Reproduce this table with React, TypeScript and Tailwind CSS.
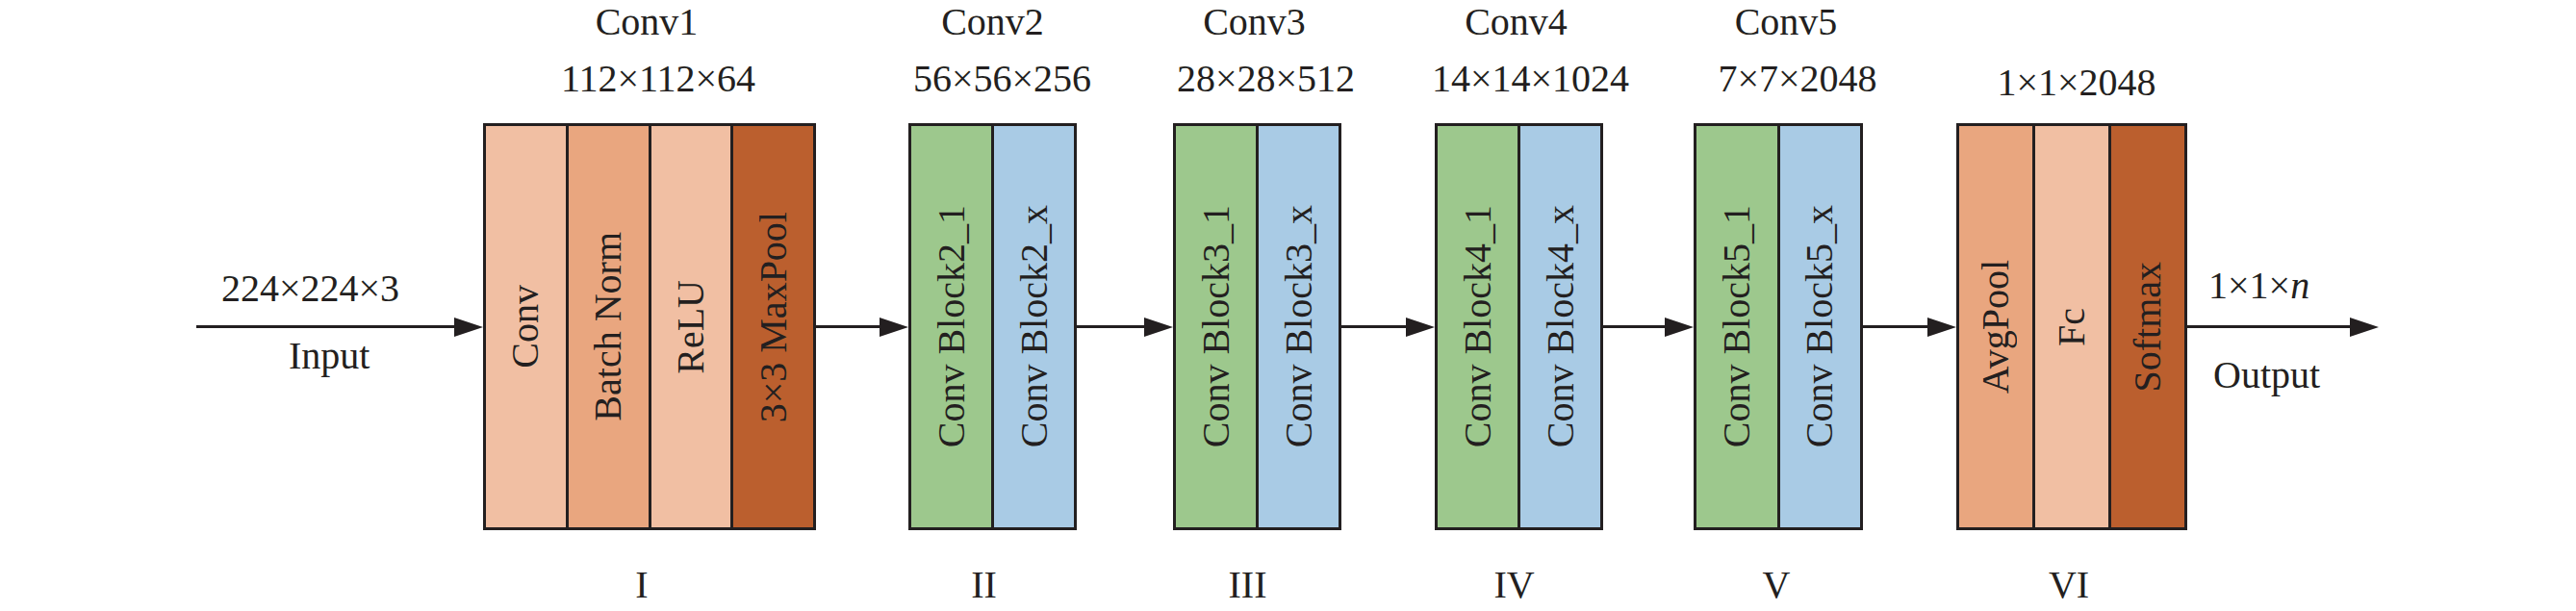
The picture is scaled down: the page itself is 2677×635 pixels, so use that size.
import type { ReactNode } from "react";

type Cell = { label: string; color: string; extra?: string };

type Stage = {
  width: string;
  title: string;
  titleNudge: string;
  size: string;
  sizeNudge: string;
  roman: string;
  romanNudge: string;
  cells: Cell[];
};

const LIGHT = "bg-[#f1bfa3]";
const MID = "bg-[#e9a67f]";
const DARK = "bg-[#bb5f2e]";
const GREEN = "bg-[#9dc88d]";
const BLUE = "bg-[#a9cbe5]";

const stages: Stage[] = [
  {
    width: "w-[346px]",
    title: "Conv1",
    titleNudge: "-translate-x-[3px]",
    size: "112×112×64",
    sizeNudge: "translate-x-[9px]",
    roman: "I",
    romanNudge: "-translate-x-[8px]",
    cells: [
      { label: "Conv", color: LIGHT },
      { label: "Batch Norm", color: MID },
      { label: "ReLU", color: LIGHT },
      { label: "3×3 MaxPool", color: DARK, extra: "pb-[20px]" },
    ],
  },
  {
    width: "w-[175px]",
    title: "Conv2",
    titleNudge: "translate-x-0",
    size: "56×56×256",
    sizeNudge: "translate-x-[10px]",
    roman: "II",
    romanNudge: "-translate-x-[9px]",
    cells: [
      { label: "Conv Block2_1", color: GREEN },
      { label: "Conv Block2_x", color: BLUE },
    ],
  },
  {
    width: "w-[175px]",
    title: "Conv3",
    titleNudge: "-translate-x-[3px]",
    size: "28×28×512",
    sizeNudge: "translate-x-[9px]",
    roman: "III",
    romanNudge: "-translate-x-[10px]",
    cells: [
      { label: "Conv Block3_1", color: GREEN },
      { label: "Conv Block3_x", color: BLUE },
    ],
  },
  {
    width: "w-[175px]",
    title: "Conv4",
    titleNudge: "-translate-x-[3px]",
    size: "14×14×1024",
    sizeNudge: "translate-x-[12px]",
    roman: "IV",
    romanNudge: "-translate-x-[5px]",
    cells: [
      { label: "Conv Block4_1", color: GREEN },
      { label: "Conv Block4_x", color: BLUE },
    ],
  },
  {
    width: "w-[176px]",
    title: "Conv5",
    titleNudge: "translate-x-[8px]",
    size: "7×7×2048",
    sizeNudge: "translate-x-[20px]",
    roman: "V",
    romanNudge: "-translate-x-[2px]",
    cells: [
      { label: "Conv Block5_1", color: GREEN },
      { label: "Conv Block5_x", color: BLUE },
    ],
  },
  {
    width: "w-[240px]",
    title: "",
    titleNudge: "translate-x-0",
    size: "1×1×2048",
    sizeNudge: "translate-x-[5px] translate-y-[4px]",
    roman: "VI",
    romanNudge: "-translate-x-[3px]",
    cells: [
      { label: "AvgPool", color: MID },
      { label: "Fc", color: LIGHT },
      { label: "Softmax", color: DARK },
    ],
  },
];

const gaps = ["w-[96px]", "w-[100px]", "w-[97px]", "w-[94px]", "w-[97px]"];

function Arrow() {
  return (
    <div className="flex h-[20px] w-full items-center">
      <div className="h-[2.5px] flex-1 bg-[#231f20]" />
      <svg width="30" height="20" viewBox="0 0 30 20" className="shrink-0">
        <polygon points="0,0 30,10 0,20" fill="#231f20" />
      </svg>
    </div>
  );
}

function Label({ children, className = "" }: { children: ReactNode; className?: string }) {
  return <div className={`whitespace-nowrap text-[40px] leading-[40px] ${className}`}>{children}</div>;
}

function StageBlock({ stage }: { stage: Stage }) {
  return (
    <div className={`flex shrink-0 flex-col items-center ${stage.width}`}>
      <div className="flex h-[128px] flex-col items-center pt-[3px]">
        <Label className={`h-[40px] ${stage.titleNudge}`}>{stage.title}</Label>
        <Label className={`mt-[19px] ${stage.sizeNudge}`}>{stage.size}</Label>
      </div>
      <div className="flex h-[423px] w-full border-[3px] border-[#231f20]">
        {stage.cells.map((cell, i) => (
          <div
            key={cell.label}
            className={`flex flex-1 items-center justify-center ${cell.color} ${cell.extra ?? ""} ${
              i > 0 ? "border-l-[3px] border-[#231f20]" : ""
            }`}
          >
            <span className="rotate-180 whitespace-nowrap text-[40px] leading-[40px] [writing-mode:vertical-rl] [text-orientation:sideways]">
              {cell.label}
            </span>
          </div>
        ))}
      </div>
      <Label className={`mt-[37px] ${stage.romanNudge}`}>{stage.roman}</Label>
    </div>
  );
}

export default function App() {
  return (
    <div className="h-[635px] w-[2677px] overflow-hidden bg-white font-['Liberation_Serif','Times_New_Roman',serif] text-[#231f20]">
      <div className="flex items-start pl-[204px]">
        {/* input */}
        <div className="mt-[128px] grid h-[423px] w-[298px] shrink-0 grid-rows-[1fr_20px_1fr]">
          <Label className="mb-[10px] ml-[26px] self-end justify-self-start">224×224×3</Label>
          <Arrow />
          <Label className="ml-[96px] self-start justify-self-start">Input</Label>
        </div>

        {stages.map((stage, i) => (
          <div key={stage.roman} className="flex items-start">
            <StageBlock stage={stage} />
            {i < gaps.length && (
              <div className={`mt-[128px] flex h-[423px] shrink-0 items-center ${gaps[i]}`}>
                <Arrow />
              </div>
            )}
          </div>
        ))}

        {/* output */}
        <div className="mt-[128px] grid h-[423px] w-[199px] shrink-0 grid-rows-[1fr_20px_1fr]">
          <Label className="mb-[13px] ml-[22px] self-end justify-self-start">
            1×1×<span className="italic">n</span>
          </Label>
          <Arrow />
          <Label className="ml-[27px] mt-[20px] self-start justify-self-start">Output</Label>
        </div>
      </div>
    </div>
  );
}
